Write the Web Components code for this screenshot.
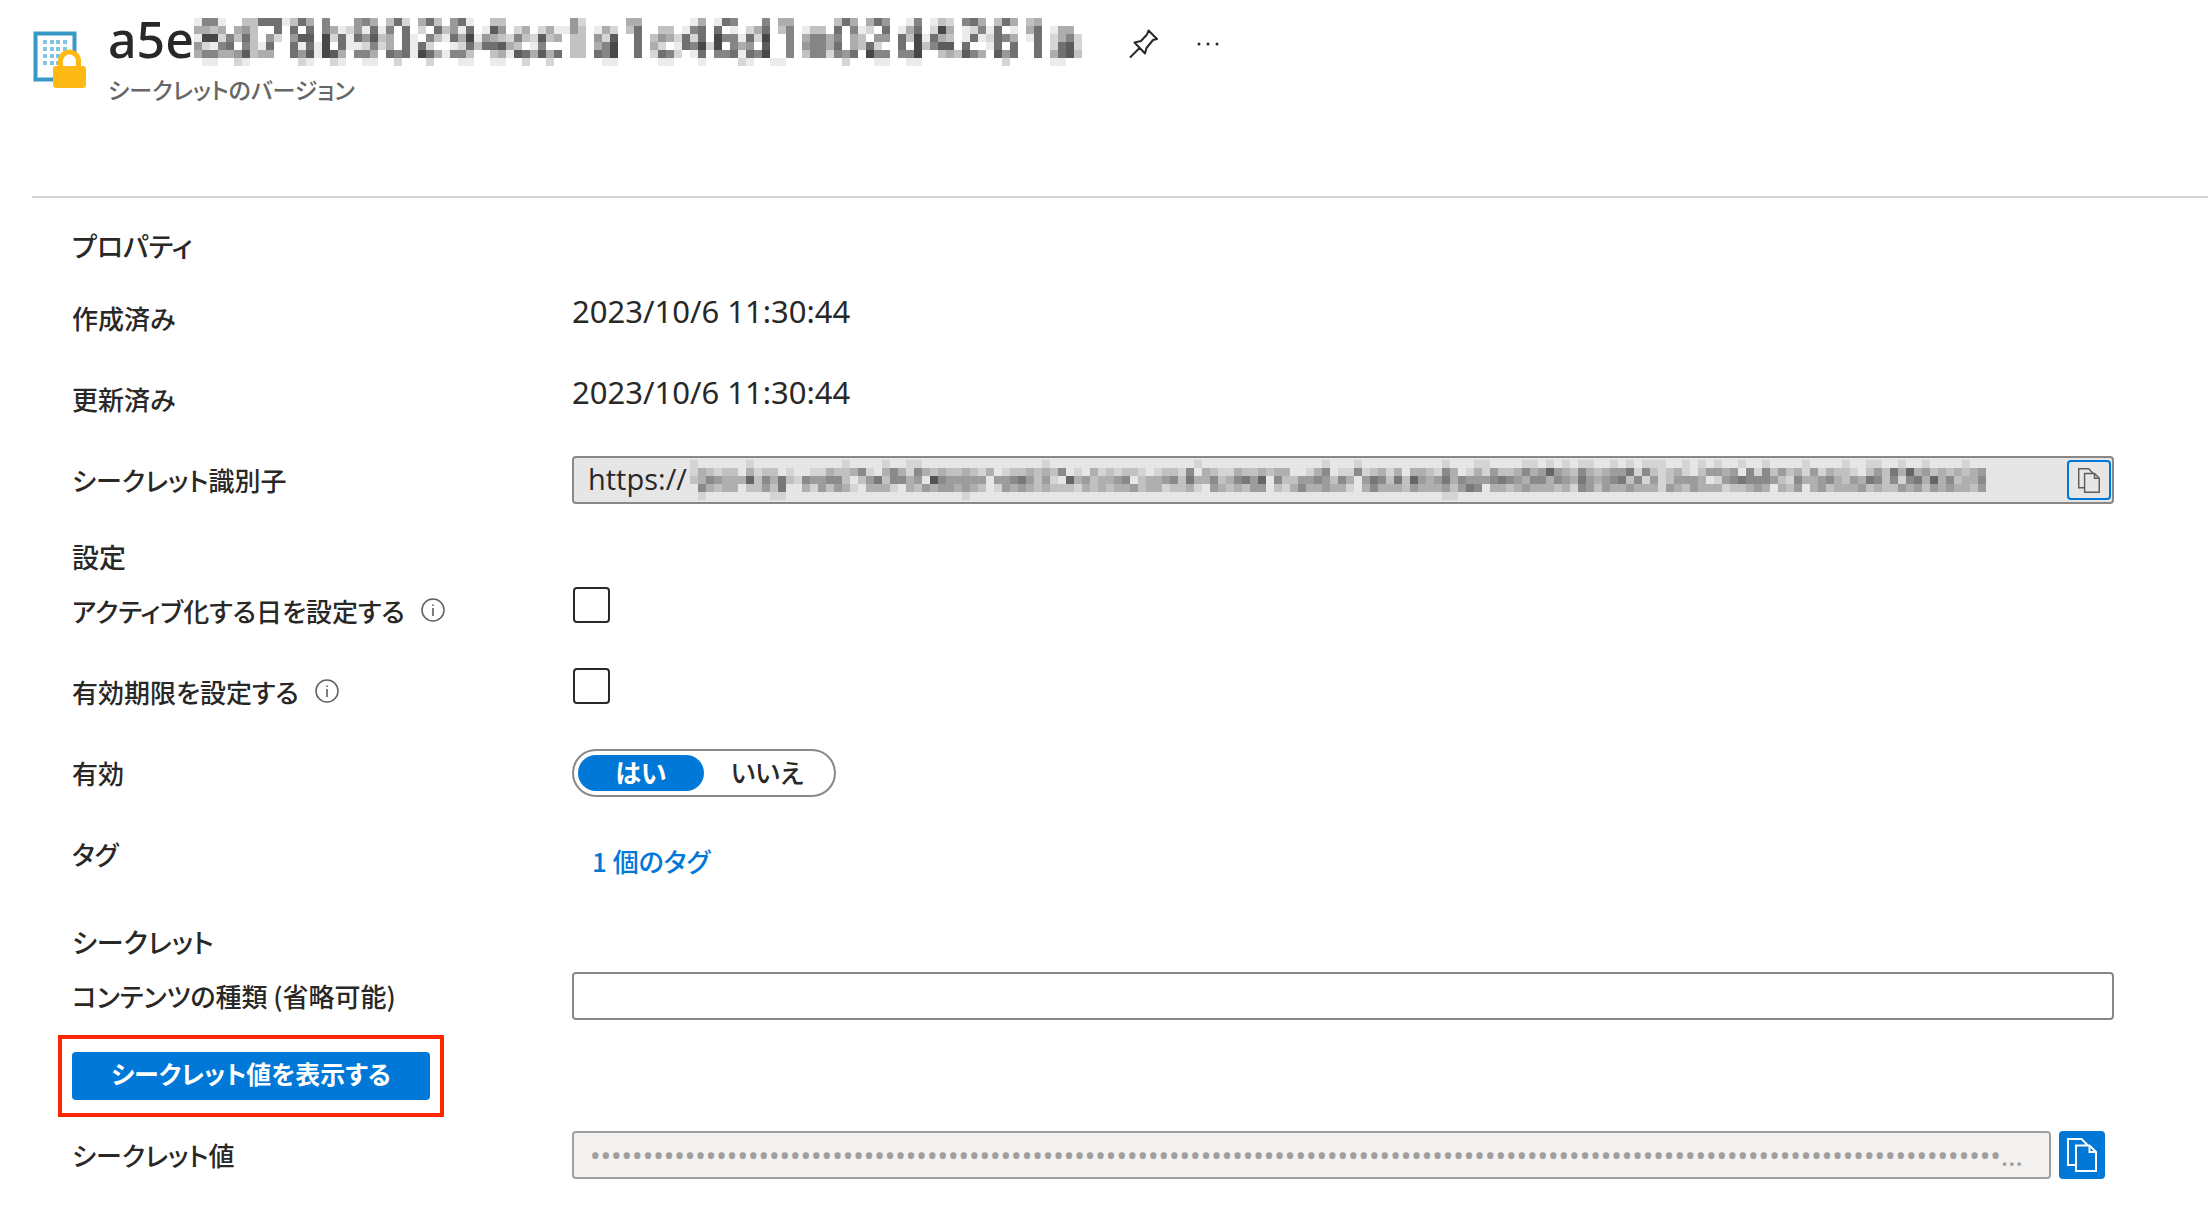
<!DOCTYPE html>
<html lang="ja">
<head>
<meta charset="utf-8">
<meta name="viewport" content="width=device-width, initial-scale=1">
<title>シークレットのバージョン</title>
<style>
  :root {
    --text: #292827;
    --muted: #666;
    --border: #8a8886;
    --primary: #0078d7;
    --mark: #ff2600;
  }

  body {
    margin: 0;
    background: #fff;
    color: var(--text);
    font-family: "Noto Sans", "Noto Sans CJK JP", sans-serif;
    font-size: 26px;
    font-feature-settings: "palt";
  }
</style>
</head>
<body>
<secret-page></secret-page>

<script>
const copyIcon = `
  <svg viewBox="0 0 30 34" fill="none" stroke="currentColor" stroke-width="2" aria-hidden="true">
    <path d="M9 27H1V1H14.5L20.5 7M9 7.500H22.500L29 14V33H9Z"/>
    <path d="M22.500 7.500V14H29"/>
  </svg>`;

const infoIcon = `
  <svg viewBox="0 0 24 24" fill="none" stroke="#605e5c" aria-hidden="true">
    <circle cx="12" cy="12" r="11" stroke-width="1.500"/>
    <path d="M12 10V18M12 6.500V8" stroke-width="1.600"/>
  </svg>`;

// label column + value column, shared by every row of the form
const rowStyle = `
  :host {
    display: grid;
    grid-template-columns: 500px minmax(0, 1fr);
    align-items: start;
    min-height: 48px;
  }

  * {
    box-sizing: border-box;
    font-feature-settings: inherit;
  }

  .label {
    display: flex;
    align-items: center;
    gap: 16px;
    height: 46px;
    font-family: "Noto Sans CJK JP", sans-serif;
    font-weight: 500;
  }

  .label svg {
    width: 24px;
    height: 24px;
  }

  input, button {
    font: inherit;
    color: inherit;
    margin: 0;
  }
`;

class PixelMask extends HTMLElement {
  connectedCallback() {
    const size = 8;
    const rows = this.getAttribute("rows").trim().split(/\s+/);
    const cols = Math.max(...rows.map(row => row.length));
    const cells = rows.map((row, y) => [...row].map((level, x) =>
      level === "0" ? "" : `<rect x="${x * size}" y="${y * size}" width="${size}" height="${size}" opacity="${level * 0.08}"/>`
    ).join("")).join("");

    this.attachShadow({ mode: "open" }).innerHTML = `
      <style>
        :host { display: block; flex: none; }
        svg { display: block; }
      </style>
      <svg width="${cols * size}" height="${rows.length * size}" shape-rendering="crispEdges" aria-hidden="true">${cells}</svg>
    `;
  }
}

class SecretHeader extends HTMLElement {
  connectedCallback() {
    this.attachShadow({ mode: "open" }).innerHTML = `
      <style>
        :host {
          display: flex;
          gap: 20px;
          height: 198px;
          box-sizing: border-box;
          margin-left: 32px;
          padding-top: 12px;
          border-bottom: 2px solid #d6d6d6;
        }

        .logo {
          flex: none;
          width: 56px;
          height: 60px;
          margin-top: 18px;
        }

        .title {
          display: flex;
          align-items: flex-end;
          height: 54px;
        }

        h1 {
          display: flex;
          align-items: flex-end;
          margin: 0;
          font-size: 50px;
          line-height: 54px;
          font-weight: 500;
        }

        p {
          margin: 5px 0 0;
          font-family: "Noto Sans CJK JP", sans-serif;
          font-size: 23px;
          line-height: 36px;
          font-weight: 500;
          color: var(--muted);
        }

        button {
          display: grid;
          place-items: center;
          width: 44px;
          height: 44px;
          margin-left: 20px;
          padding: 0;
          border: 0;
          background: none;
          color: inherit;
        }

        h1 + button { margin-left: 40px; }

        button svg {
          width: 30px;
          height: 30px;
        }
      </style>

      <svg class="logo" viewBox="0 0 56 60" aria-hidden="true">
        <rect x="3.500" y="3.500" width="39" height="46" fill="#fff" stroke="#3999c6" stroke-width="4"/>
        <g fill="#7fc4e0">
          ${[10, 17, 24, 31].map(y => [11, 18, 24, 31].map(x => `<rect x="${x}" y="${y}" width="4" height="4"/>`).join("")).join("")}
        </g>
        <path d="M28.500 38V31a9 9 0 0 1 18 0v7" fill="#fff" stroke="#ffb914" stroke-width="5"/>
        <rect x="21" y="36" width="33" height="22" rx="3" fill="#ffb914"/>
      </svg>

      <div>
        <div class="title">
          <h1><slot></slot><slot name="mask"></slot></h1>
          <button aria-label="ピン留め">
            <svg viewBox="0 0 30 30" fill="none" stroke="currentColor" stroke-width="2" stroke-linejoin="round" stroke-linecap="round">
              <path d="M1.500 28L10.500 19M19.500 1.500L28 10L24 11L17.500 19L16 24.500L5.500 13.500L12 12L18 5.500Z"/>
            </svg>
          </button>
          <button aria-label="その他">
            <svg viewBox="0 0 30 30" fill="currentColor">
              <circle cx="6" cy="15" r="1.500"/><circle cx="15" cy="15" r="1.500"/><circle cx="24" cy="15" r="1.500"/>
            </svg>
          </button>
        </div>
        <p><slot name="subtitle"></slot></p>
      </div>
    `;
  }
}

class FormSection extends HTMLElement {
  connectedCallback() {
    this.attachShadow({ mode: "open" }).innerHTML = `
      <style>
        :host { display: block; }

        h2 {
          margin: 0 0 10px;
          font-family: "Noto Sans CJK JP", sans-serif;
          font-size: 27px;
          line-height: 40px;
          font-weight: 500;
        }

        :host([spaced]) h2 { margin-bottom: 28px; }

        .rows {
          display: flex;
          flex-direction: column;
          gap: 33px;
        }

        :host([tight]) .rows { gap: 0; }
      </style>
      <h2>${this.getAttribute("heading")}</h2>
      <div class="rows"><slot></slot></div>
    `;
  }
}

class ValueRow extends HTMLElement {
  connectedCallback() {
    this.attachShadow({ mode: "open" }).innerHTML = `
      <style>
        ${rowStyle}
        .value {
          font-size: 31px;
          line-height: 34px;
        }

        ::slotted(a) {
          display: block;
          width: fit-content;
          padding: 14px 20px 11px;
          font-family: "Noto Sans CJK JP", sans-serif;
          font-size: 26px;
          font-weight: 500;
          color: var(--primary);
          text-decoration: none;
        }
      </style>
      <div class="label">${this.getAttribute("label")}</div>
      <div class="value"><slot></slot></div>
    `;
  }
}

class IdentifierRow extends HTMLElement {
  connectedCallback() {
    this.attachShadow({ mode: "open" }).innerHTML = `
      <style>
        ${rowStyle}
        .box {
          display: flex;
          align-items: center;
          height: 48px;
          padding: 0 1px 0 14px;
          border: 2px solid var(--border);
          border-radius: 4px;
          background: #e6e6e6;
        }

        input {
          flex: none;
          width: 102px;
          height: 42px;
          padding: 0 0 4px;
          border: 0;
          background: none;
          font-family: "Open Sans", "Noto Sans", sans-serif;
          font-size: 29px;
          outline: 0;
        }

        button {
          display: grid;
          place-items: center;
          flex: none;
          width: 44px;
          height: 40px;
          margin-left: auto;
          padding: 0;
          border: 2px solid var(--primary);
          border-radius: 4px;
          background: none;
          color: #605e5c;
        }

        button svg {
          width: 22px;
          height: 25px;
        }
      </style>
      <label class="label" for="url">${this.getAttribute("label")}</label>
      <div class="box">
        <input id="url" type="text" value="${this.getAttribute("value")}" readonly>
        <slot></slot>
        <button aria-label="コピー">${copyIcon}</button>
      </div>
    `;
  }
}

class CheckRow extends HTMLElement {
  connectedCallback() {
    this.attachShadow({ mode: "open" }).innerHTML = `
      <style>
        ${rowStyle}
        input {
          appearance: none;
          width: 37px;
          height: 36px;
          margin-left: 1px;
          border: 2px solid var(--text);
          border-radius: 4px;
          background: #fff;
        }

        input:checked { background: var(--primary); }
      </style>
      <label class="label" for="check">${this.getAttribute("label")}${infoIcon}</label>
      <input id="check" type="checkbox">
    `;
  }
}

class ToggleRow extends HTMLElement {
  connectedCallback() {
    this.attachShadow({ mode: "open" }).innerHTML = `
      <style>
        ${rowStyle}
        .toggle {
          display: flex;
          width: 264px;
          height: 48px;
          padding: 4px;
          border: 2px solid var(--border);
          border-radius: 24px;
          font-family: "Noto Sans CJK JP", sans-serif;
          font-weight: 500;
        }

        .toggle label {
          flex: 1;
          border-radius: 18px;
          line-height: 34px;
          text-align: center;
        }

        .toggle label:has(:checked) {
          background: var(--primary);
          color: #fff;
          font-weight: 700;
        }

        input {
          position: absolute;
          appearance: none;
          outline: 0;
        }
      </style>
      <div class="label" id="name">${this.getAttribute("label")}</div>
      <div class="toggle" role="radiogroup" aria-labelledby="name">
        <label><input type="radio" name="enabled" checked>はい</label>
        <label><input type="radio" name="enabled">いいえ</label>
      </div>
    `;
  }
}

class TextRow extends HTMLElement {
  connectedCallback() {
    const secret = this.hasAttribute("secret");

    this.attachShadow({ mode: "open" }).innerHTML = `
      <style>
        ${rowStyle}
        .field {
          display: flex;
          gap: 8px;
        }

        input {
          flex: 1;
          min-width: 0;
          height: 48px;
          padding: 0 16px;
          border: 2px solid var(--border);
          border-radius: 4px;
          background: #fff;
        }

        input:disabled {
          border-color: #a19f9d;
          background: #f3f2f1;
          color: #a19f9d;
          font-size: 28px;
          text-overflow: ellipsis;
        }

        button {
          display: grid;
          place-items: center;
          width: 46px;
          height: 48px;
          margin-right: 9px;
          padding: 0;
          border: 0;
          border-radius: 4px;
          background: var(--primary);
          color: #fff;
        }

        button svg {
          width: 30px;
          height: 34px;
        }
      </style>
      <label class="label" for="text">${this.getAttribute("label")}</label>
      <div class="field">
        ${secret
          ? `<input id="text" type="password" value="${"x".repeat(200)}" disabled><button aria-label="コピー">${copyIcon}</button>`
          : `<input id="text" type="text">`}
      </div>
    `;
  }
}

class RevealButton extends HTMLElement {
  connectedCallback() {
    this.attachShadow({ mode: "open" }).innerHTML = `
      <style>
        :host {
          display: block;
          align-self: flex-start;
          margin: 15px 0 14px -14px;
          padding: 13px 10px;
          border: 4px solid var(--mark);
        }

        button {
          display: block;
          width: 358px;
          height: 48px;
          padding: 0 0 6px;
          border: 0;
          border-radius: 4px;
          background: var(--primary);
          color: #fff;
          font: 700 25px "Noto Sans CJK JP", sans-serif;
          font-feature-settings: inherit;
        }
      </style>
      <button><slot></slot></button>
    `;
  }
}

class SecretPage extends HTMLElement {
  connectedCallback() {
    this.attachShadow({ mode: "open" }).innerHTML = `
      <style>
        :host { display: block; }

        main {
          display: flex;
          flex-direction: column;
          gap: 33px;
          padding: 28px 94px 32px 72px;
        }
      </style>

      <secret-header>
        a5e
        <pixel-mask slot="mask" rows="
          166100337771374060005640372047305710033000000005200000440000001401760006044000003740475001601320674037403400000
          443404530070707064125171607020735170185024024115301420370033016707010247036013307061207014702940126170104701440
          199263730520588092717583407106317491543263283403305280070354272709661729006046646043055073917430171276401702462
          521670631700717190711262407172001273778430160003304690070420176929064508006056647043720070936880700170700702782
          466445834400758198406640767197416630034187484703307690070276201706671769006036626570966066900343864085700704783
          011002100000021002100110020002000110011002002000000110000011000100002100110000000200011001100000000002000001100
        "></pixel-mask>
        <span slot="subtitle">シークレットのバージョン</span>
      </secret-header>

      <main>
        <form-section heading="プロパティ" spaced>
          <value-row label="作成済み">2023/10/6 11:30:44</value-row>
          <value-row label="更新済み">2023/10/6 11:30:44</value-row>
          <identifier-row label="シークレット識別子" value="https://">
            <pixel-mask rows="
              100000010000000000010000100110000000000000001000000000000000000100000000000000010001000000000010001100001101010110010101110010101001001000010000100110010010000100
              132122031220100113223510353153232232130122323250103121221012215032113223233001350115123130332153013142235347432532344615212310244340515242314132210242637342323234
              235433372536215445520246255340854444404456424107342334502334526335235647052244542530465262743463544456543553543643456251412444301456555421533453243652515637352335
              053233022426003142431033310324344343201434323222132323342331223104323244021353343310353332433342465033234333231542433433314324333122343032403423334232243424343324
              010000000011000000000000000000000010000000000000000000000000000000000000000000000000000000000011000000000000000000000000000000000000000000000000000000000000000000
            "></pixel-mask>
          </identifier-row>
        </form-section>

        <form-section heading="設定">
          <check-row label="アクティブ化する日を設定する"></check-row>
          <check-row label="有効期限を設定する"></check-row>
          <toggle-row label="有効"></toggle-row>
          <value-row label="タグ"><a href="#tags">1 個のタグ</a></value-row>
        </form-section>

        <form-section heading="シークレット" tight>
          <text-row label="コンテンツの種類 (省略可能)"></text-row>
          <reveal-button>シークレット値を表示する</reveal-button>
          <text-row label="シークレット値" secret></text-row>
        </form-section>
      </main>
    `;
  }
}

customElements.define("pixel-mask", PixelMask);
customElements.define("secret-header", SecretHeader);
customElements.define("form-section", FormSection);
customElements.define("value-row", ValueRow);
customElements.define("identifier-row", IdentifierRow);
customElements.define("check-row", CheckRow);
customElements.define("toggle-row", ToggleRow);
customElements.define("text-row", TextRow);
customElements.define("reveal-button", RevealButton);
customElements.define("secret-page", SecretPage);
</script>
</body>
</html>
